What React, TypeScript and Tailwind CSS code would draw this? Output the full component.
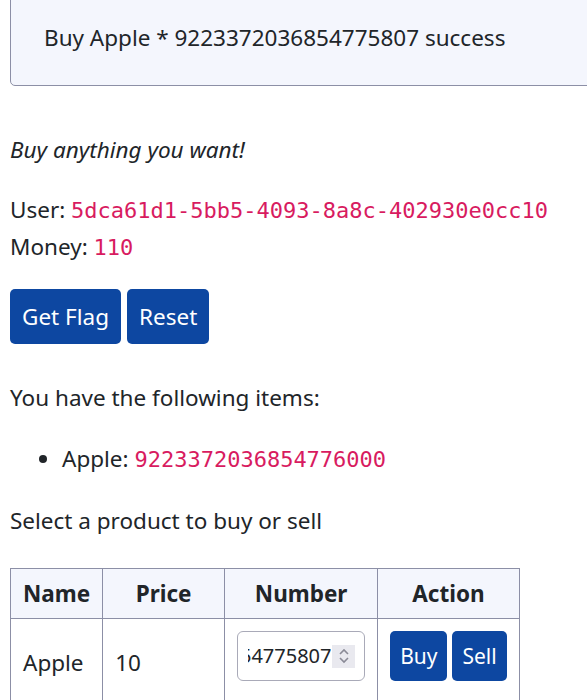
import { useEffect, useRef } from 'react';

export default function App() {
  const sans = "font-['Noto_Sans',sans-serif]";
  const mono = "font-['DejaVu_Sans_Mono',monospace] text-[22px] text-[#d81b60]";
  const cell = 'border border-[#8c8fa6] px-[12px]';
  const numberRef = useRef<HTMLInputElement>(null);

  // the field shows the tail of the long number, as the reference does
  useEffect(() => {
    const el = numberRef.current;
    if (el) el.scrollLeft = el.scrollWidth;
  }, []);

  return (
    <div className={`${sans} min-h-screen overflow-hidden bg-white px-[10px] text-[22.5px] leading-[36px] text-[#212529]`}>
      {/* result alert, wider than the viewport */}
      <div className="-mr-[40px] -mt-[14px] rounded-[5px] border border-[#8c8fa6] bg-[#f4f6fd] px-[33px] pb-[29px] pt-[33px]">
        Buy Apple * 9223372036854775807 success
      </div>

      <p className="mt-[46px] italic">Buy anything you want!</p>

      <div className="mt-[24px]">
        <div>
          User: <code className={mono}>5dca61d1-5bb5-4093-8a8c-402930e0cc10</code>
        </div>
        <div>
          Money: <code className={mono}>110</code>
        </div>
      </div>

      <div className="mt-[23px] flex gap-[6px]">
        <button className="h-[55px] rounded-[5px] bg-[#0d47a1] px-[12px] text-white">Get Flag</button>
        <button className="h-[55px] rounded-[5px] bg-[#0d47a1] px-[12px] text-white">Reset</button>
      </div>

      <p className="mt-[36px]">You have the following items:</p>

      <ul className="mt-[25px] list-disc pl-[52px]">
        <li>
          Apple: <code className={mono}>9223372036854776000</code>
        </li>
      </ul>

      <p className="mt-[25px]">Select a product to buy or sell</p>

      <table className="mt-[29px] border-collapse border border-[#8c8fa6]">
        <thead>
          <tr className="bg-[#f4f6fd]">
            <th className={`${cell} h-[50px] w-[90px] text-center font-bold`}>Name</th>
            <th className={`${cell} w-[122px] text-center font-bold`}>Price</th>
            <th className={`${cell} w-[151px] text-center font-bold`}>Number</th>
            <th className={`${cell} w-[139px] text-center font-bold`}>Action</th>
          </tr>
        </thead>
        <tbody>
          <tr>
            <td className={`${cell} h-[88px] align-middle`}>Apple</td>
            <td className={`${cell} align-middle`}>10</td>
            <td className={`${cell} pb-[26px] pt-[12px] align-top`}>
              <div className="flex h-[50px] w-[128px] items-center overflow-hidden rounded-[6px] border border-[#a9aab8] bg-white pl-[10px] pr-[9px]">
                <input
                  ref={numberRef}
                  readOnly
                  value="9223372036854775807"
                  className="min-w-0 flex-1 bg-transparent text-[20px] text-[#212529] outline-none"
                />
                <div className="ml-[1px] flex h-[23px] w-[23px] shrink-0 items-center justify-center bg-[#e9e9ef]">
                  <svg width="12" height="18" viewBox="0 0 12 18" fill="none" stroke="#8a8a96" strokeWidth="1.6">
                    <path d="M2 7 L6 3 L10 7" />
                    <path d="M2 11 L6 15 L10 11" />
                  </svg>
                </div>
              </div>
            </td>
            <td className={`${cell} pb-[26px] pt-[12px] align-top`}>
              <div className="flex gap-[5px]">
                <button className="h-[50px] rounded-[5px] bg-[#0d47a1] px-[10px] text-[21px] text-white">Buy</button>
                <button className="h-[50px] rounded-[5px] bg-[#0d47a1] px-[10px] text-[21px] text-white">Sell</button>
              </div>
            </td>
          </tr>
        </tbody>
      </table>
    </div>
  );
}
